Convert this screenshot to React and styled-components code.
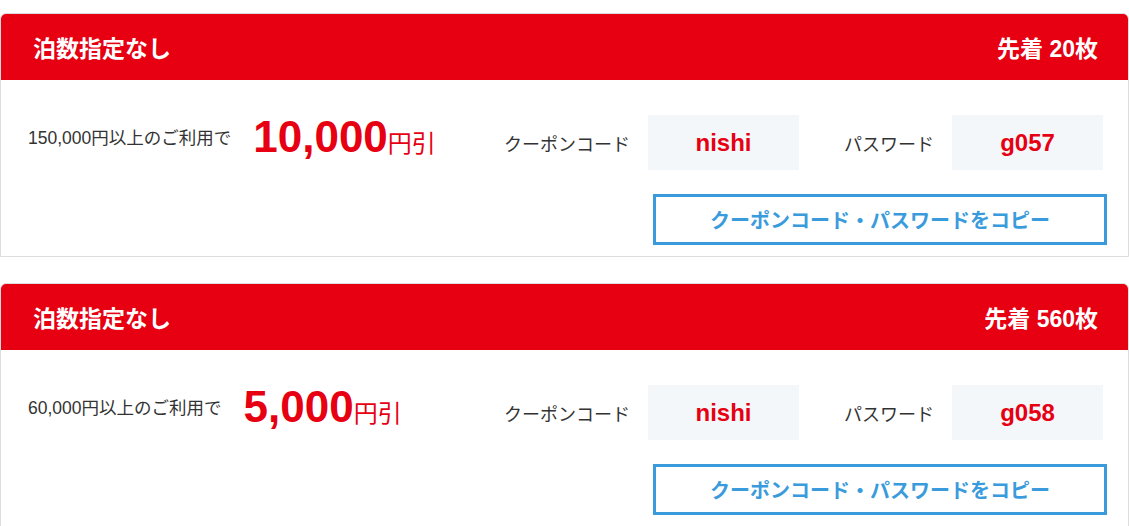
import React from 'react';
import styled, { createGlobalStyle } from 'styled-components';

const GlobalStyle = createGlobalStyle`
  html, body {
    margin: 0;
    padding: 0;
    background: #ffffff;
  }
  body {
    font-family: "Liberation Sans", "Noto Sans CJK JP", sans-serif;
    color: #333333;
  }
  * {
    box-sizing: border-box;
  }
`;

const Page = styled.div`
  display: flex;
  flex-direction: column;
  gap: 26px;
  padding-top: 13px;
  width: 1129px;
`;

const Card = styled.section`
  border: 1px solid #dddddd;
  border-radius: 6px 6px 0 0;
  overflow: hidden;
  background: #ffffff;
`;

const CardHeader = styled.header`
  display: flex;
  align-items: center;
  justify-content: space-between;
  height: 66px;
  padding: 0 30px 0 32px;
  background: #e60012;
  color: #ffffff;
  font-size: 23px;
  font-weight: bold;
`;

const CardBody = styled.div`
  display: flex;
  flex-direction: column;
  padding: 35px 21px 11px 27px;
`;

const TopRow = styled.div`
  display: flex;
  align-items: center;
  justify-content: space-between;
  padding-right: 4px;
`;

const Condition = styled.div`
  display: flex;
  align-items: center;
  gap: 22px;
  margin-top: -12px;
`;

const Minimum = styled.span`
  font-size: 17.5px;
  color: #333333;
`;

const Discount = styled.span`
  color: #e60012;
  white-space: nowrap;
`;

const Amount = styled.span`
  font-size: 44px;
  font-weight: bold;
`;

const Unit = styled.span`
  font-size: 24px;
`;

const Codes = styled.div`
  display: flex;
  align-items: center;
`;

const Label = styled.span`
  font-size: 18px;
  color: #333333;
  margin-right: 18px;
  margin-left: ${({ $first }) => ($first ? '0' : '45px')};
`;

const CodeBox = styled.div`
  display: flex;
  align-items: center;
  justify-content: center;
  width: 151px;
  height: 55px;
  background: #f3f7fa;
  color: #e60012;
  font-size: 24px;
  font-weight: bold;
`;

const CopyButton = styled.button`
  align-self: flex-end;
  margin-top: 24px;
  width: 454px;
  height: 51px;
  border: 3px solid #3a9bdc;
  background: #ffffff;
  color: #3a9bdc;
  font-family: inherit;
  font-size: 20px;
  font-weight: bold;
  cursor: pointer;
`;

const coupons = [
  { minimum: '150,000', amount: '10,000', stock: 20, code: 'nishi', password: 'g057' },
  { minimum: '60,000', amount: '5,000', stock: 560, code: 'nishi', password: 'g058' },
];

const CouponCard = ({ coupon }) => (
  <Card>
    <CardHeader>
      <span>泊数指定なし</span>
      <span>先着 {coupon.stock}枚</span>
    </CardHeader>
    <CardBody>
      <TopRow>
        <Condition>
          <Minimum>{coupon.minimum}円以上のご利用で</Minimum>
          <Discount>
            <Amount>{coupon.amount}</Amount>
            <Unit>円引</Unit>
          </Discount>
        </Condition>
        <Codes>
          <Label $first>クーポンコード</Label>
          <CodeBox>{coupon.code}</CodeBox>
          <Label>パスワード</Label>
          <CodeBox>{coupon.password}</CodeBox>
        </Codes>
      </TopRow>
      <CopyButton type="button">クーポンコード・パスワードをコピー</CopyButton>
    </CardBody>
  </Card>
);

const App = () => (
  <>
    <GlobalStyle />
    <Page>
      {coupons.map((c) => (
        <CouponCard key={c.password} coupon={c} />
      ))}
    </Page>
  </>
);

export default App;
